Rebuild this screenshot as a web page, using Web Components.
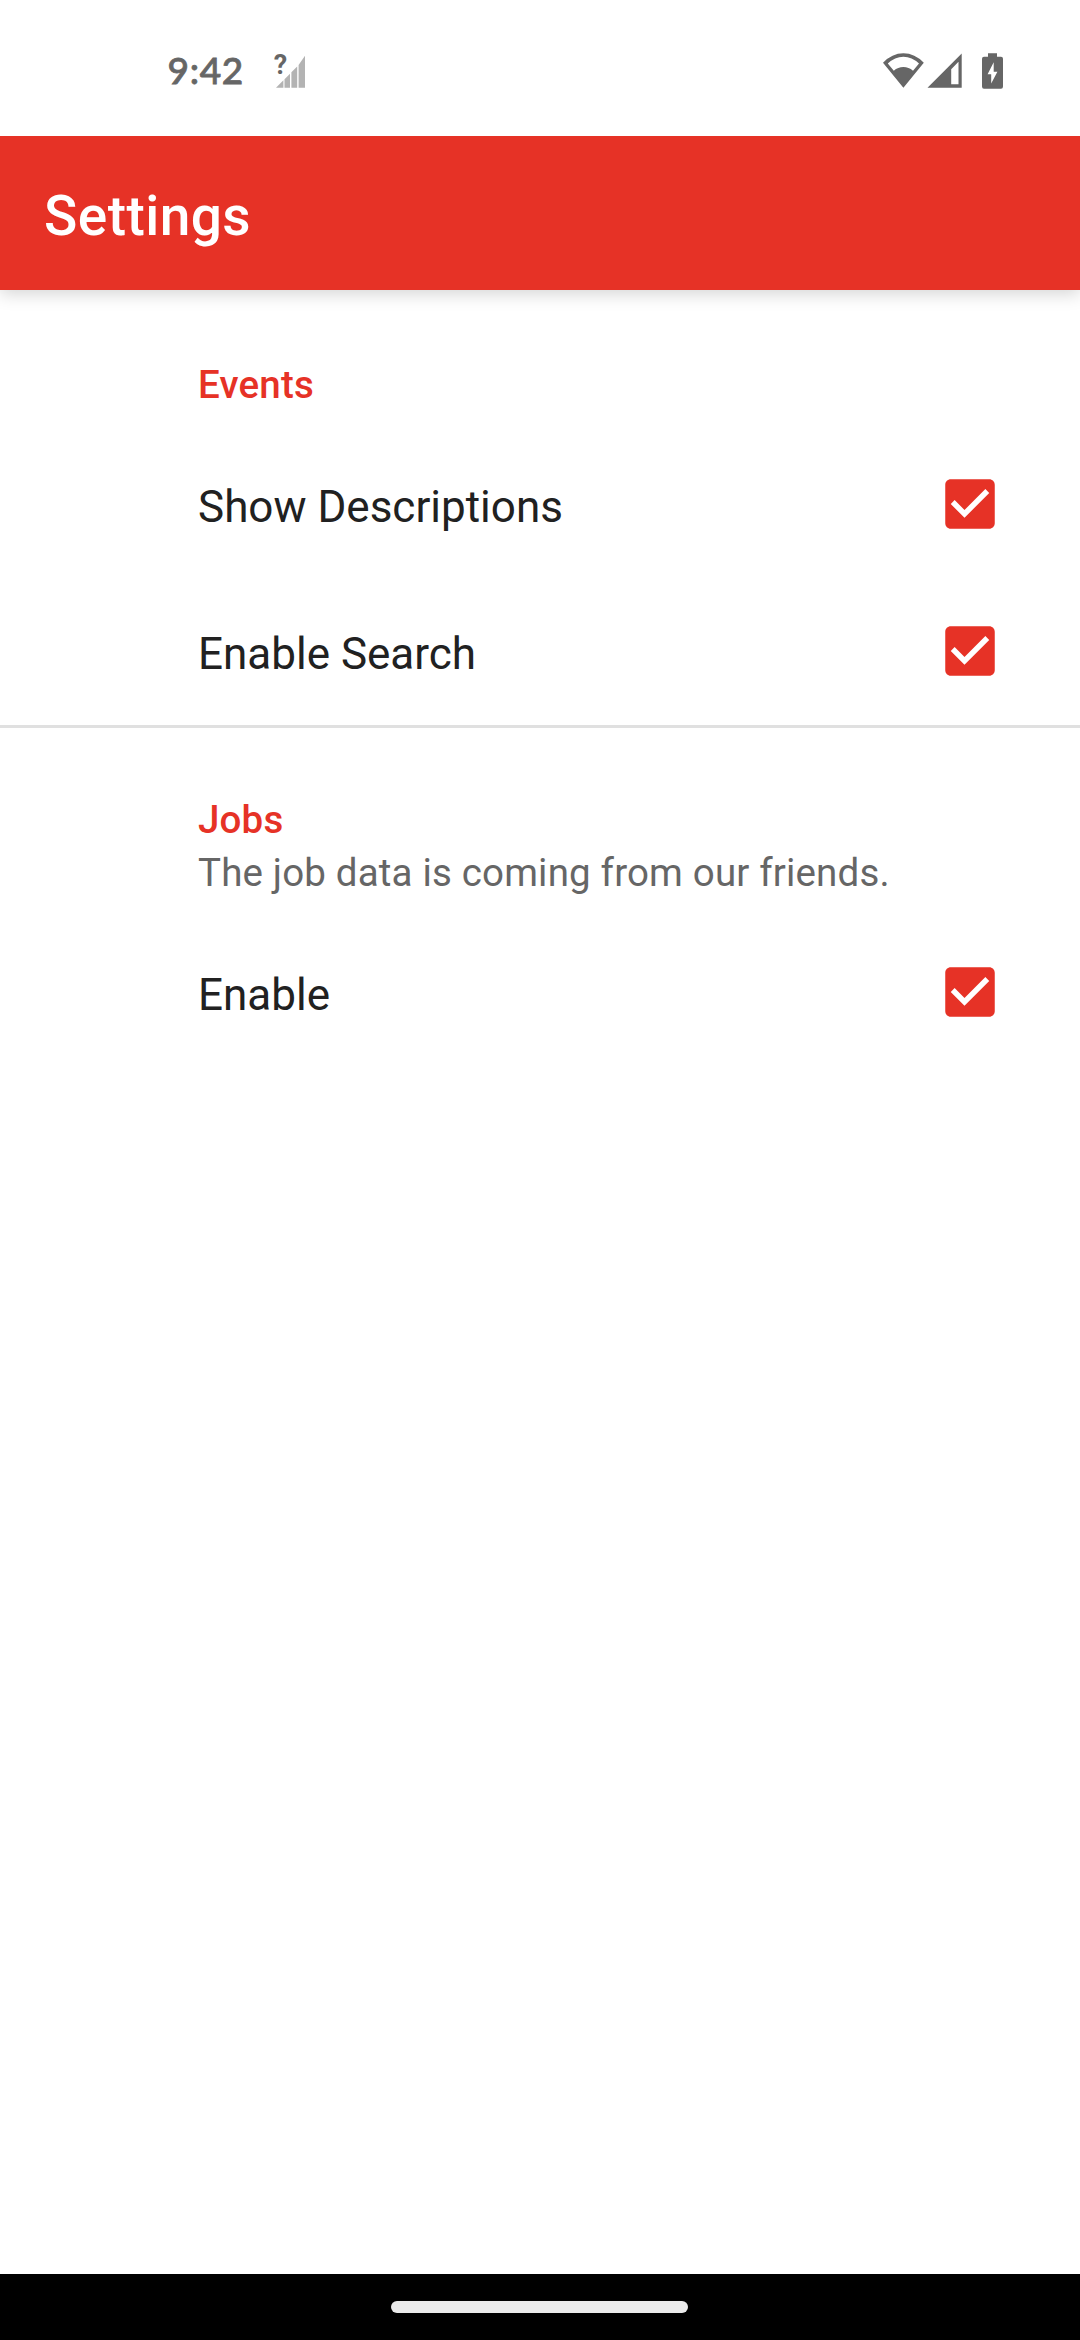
<!DOCTYPE html>
<html lang="en">
<head>
<meta charset="utf-8">
<title>Settings</title>
<style>
html,body{margin:0;padding:0;background:#fff}
body{width:1080px;height:2340px;overflow:hidden;font-family:Roboto,"Liberation Sans",sans-serif}
</style>
</head>
<body>
<settings-screen></settings-screen>
<script>
const define = (name, html) => customElements.define(name, class extends HTMLElement {
  constructor() {
    super();
    const t = document.createElement('template');
    t.innerHTML = html;
    this.attachShadow({mode: 'open'}).appendChild(t.content.cloneNode(true));
  }
});

define('status-bar', `
<style>
:host{display:flex;height:136px;flex:none;color:#666;background:#fff;position:relative;z-index:1}
.time{font:500 37px/48px Lato,sans-serif;letter-spacing:.7px;-webkit-text-stroke:.8px #666;margin:46px 0 0 167.5px;width:102.5px;flex:none}
svg{display:block;flex:none;margin-top:48px}
.right{margin-left:auto;margin-right:70px}
</style>
<div class="time">9:42</div>
<svg width="40" height="44" viewBox="270 48 40 44">
  <path fill="#b3b3b3" d="M276 87.7L283.4 80.3V87.7ZM284.5 79.2L290 73.7V87.7H284.5ZM291.4 72.3L297.2 66.5V87.7H291.4ZM298.6 65.1L305 55.7V87.7H298.6Z"/>
  <text x="273.8" y="74" font-family="Roboto" font-weight="700" font-size="27" fill="#666" stroke="#fff" stroke-width="3" paint-order="stroke">?</text>
</svg>
<svg class="right" width="130" height="44" viewBox="880 48 130 44">
  <path fill="#666" fill-rule="evenodd" d="M883 62.7Q892 53.2 903.4 53.2T923.8 62.7L903.4 87.7ZM887.8 63.6L893.8 70.7Q898 67 903.4 67T913 70.7L919 63.6Q912 56.7 903.4 56.7T887.8 63.6Z"/>
  <path fill="#666" fill-rule="evenodd" d="M927.5 87.7L961.7 53.5V87.7ZM951.2 84.2H958.5V61.8L951.2 69.2Z"/>
  <path fill="#666" fill-rule="evenodd" d="M988 53.3H997V56.7H1001Q1003 56.7 1003 58.7V86.6Q1003 88.8 1001 88.8H984Q982 88.8 982 86.6V58.7Q982 56.7 984 56.7H988ZM993.7 62.2L987.6 74.2H991.2V83.4L997.4 71.8H993.7Z"/>
</svg>`);

define('app-bar', `
<style>
:host{display:flex;align-items:center;height:154px;flex:none;box-sizing:border-box;padding:6px 44px 0;background:#e63226;color:#fff;font-size:55px;font-weight:500;line-height:64px;letter-spacing:.45px;position:relative;box-shadow:0 4px 16px rgba(0,0,0,.17)}
</style>
<span><slot></slot></span>`);

define('pref-category', `
<style>
:host{display:block;padding:72px 44px 0 198px;height:141px;box-sizing:border-box;flex:none}
:host([described]){height:191px;padding-top:69px}
.name{font-size:38.5px;line-height:45px;font-weight:500;letter-spacing:.18px;color:#e63226}
::slotted([slot=summary]){display:block;font-size:38.5px;line-height:45px;letter-spacing:.17px;color:#666;margin-top:8px}
</style>
<div class="name"><slot></slot></div><slot name="summary"></slot>`);

define('check-box', `
<style>:host{display:block;width:66px;height:66px;margin-bottom:1px}svg{display:block}</style>
<svg width="66" height="66" viewBox="0 0 24 24"><path fill="#e63226" d="M19 3H5c-1.11 0-2 .9-2 2v14c0 1.1.89 2 2 2h14c1.11 0 2-.9 2-2V5c0-1.1-.89-2-2-2zm-9 14l-5-5 1.41-1.41L10 14.17l7.59-7.59L19 8l-9 9z"/></svg>`);

define('pref-row', `
<style>
:host{display:flex;align-items:center;justify-content:space-between;height:147px;flex:none;box-sizing:border-box;padding:0 77px 0 198px;font-size:44px;line-height:52px;color:#212121}
span{padding-top:4px}
</style>
<span><slot></slot></span><check-box></check-box>`);

define('pref-divider', `<style>:host{display:block;height:3px;flex:none;background:#e0e0e0}</style>`);

define('nav-bar', `
<style>
:host{display:flex;height:66px;flex:none;background:#000;margin-top:auto}
div{margin:27px 0 0 391px;width:297px;height:12px;border-radius:6px;background:#ebebeb}
</style><div></div>`);

define('settings-screen', `
<style>:host{display:flex;flex-direction:column;width:1080px;height:2340px;background:#fff}</style>
<status-bar></status-bar>
<app-bar>Settings</app-bar>
<pref-category>Events</pref-category>
<pref-row>Show Descriptions</pref-row>
<pref-row>Enable Search</pref-row>
<pref-divider></pref-divider>
<pref-category described>Jobs<span slot="summary">The job data is coming from our friends.</span></pref-category>
<pref-row>Enable</pref-row>
<nav-bar></nav-bar>`);
</script>
</body>
</html>
